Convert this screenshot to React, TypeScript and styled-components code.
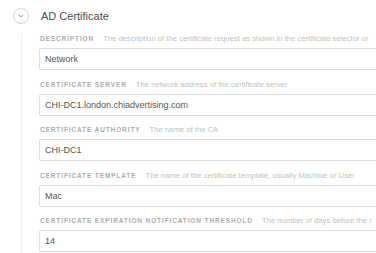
import { createGlobalStyle } from "styled-components";
import styled from "styled-components";

const GlobalStyle = createGlobalStyle`
  html, body {
    margin: 0;
    padding: 0;
    background: #ffffff;
  }
  body {
    font-family: "Liberation Sans", Arial, sans-serif;
    overflow: hidden;
  }
`;

const Section = styled.div`
  width: 376px;
  height: 253px;
  padding-top: 8px;
  box-sizing: border-box;
  overflow: hidden;
`;

const Header = styled.div`
  display: flex;
  align-items: center;
  height: 16px;
  padding-left: 13px;
`;

const Toggle = styled.button`
  width: 16px;
  height: 16px;
  padding: 0;
  border: 1px solid #d4d4d4;
  border-radius: 50%;
  background: #fff;
  display: flex;
  align-items: center;
  justify-content: center;
  box-sizing: border-box;
`;

const Title = styled.h2`
  margin: 0 0 0 12px;
  font-size: 11px;
  font-weight: 400;
  color: #4d4d4d;
  white-space: nowrap;
`;

const Body = styled.div`
  margin: 9px 0 0 21px;
  padding: 1px 0 0 17px;
  border-left: 1px solid #ececec;
  height: 240px;
  overflow: hidden;
`;

const Field = styled.div`
  margin-bottom: 9.5px;
`;

const LabelRow = styled.div`
  display: flex;
  align-items: baseline;
  height: 10px;
  line-height: 10px;
  margin-bottom: 4px;
  white-space: nowrap;
`;

const Label = styled.span`
  font-size: 6.5px;
  font-weight: 700;
  letter-spacing: 0.88px;
  color: #ababab;
  padding-left: 1px;
`;

const Hint = styled.span`
  font-size: 7.7px;
  color: #c0c0c0;
  margin-left: 9px;
`;

const Input = styled.div`
  height: 22px;
  width: 360px;
  box-sizing: border-box;
  border: 1px solid #dedede;
  border-radius: 2px;
  background: #fff;
  display: flex;
  align-items: center;
  padding-left: 5px;
  font-size: 9px;
  color: #555555;
  white-space: nowrap;
`;

const fields = [
  {
    label: "DESCRIPTION",
    hint: "The description of the certificate request as shown in the certificate selector or",
    value: "Network",
  },
  {
    label: "CERTIFICATE SERVER",
    hint: "The network address of the certificate server",
    value: "CHI-DC1.london.chiadvertising.com",
  },
  {
    label: "CERTIFICATE AUTHORITY",
    hint: "The name of the CA",
    value: "CHI-DC1",
  },
  {
    label: "CERTIFICATE TEMPLATE",
    hint: "The name of the certificate template, usually Machine or User",
    value: "Mac",
  },
  {
    label: "CERTIFICATE EXPIRATION NOTIFICATION THRESHOLD",
    hint: "The number of days before the r",
    value: "14",
  },
];

export default function App() {
  return (
    <>
      <GlobalStyle />
      <Section>
        <Header>
          <Toggle>
            <svg width="6" height="4" viewBox="0 0 6 4">
              <path d="M0.8 0.8 L3 3 L5.2 0.8" fill="none" stroke="#8a8a8a" strokeWidth="0.9" />
            </svg>
          </Toggle>
          <Title>AD Certificate</Title>
        </Header>
        <Body>
          {fields.map((f) => (
            <Field key={f.label}>
              <LabelRow>
                <Label>{f.label}</Label>
                <Hint>{f.hint}</Hint>
              </LabelRow>
              <Input>{f.value}</Input>
            </Field>
          ))}
        </Body>
      </Section>
    </>
  );
}
